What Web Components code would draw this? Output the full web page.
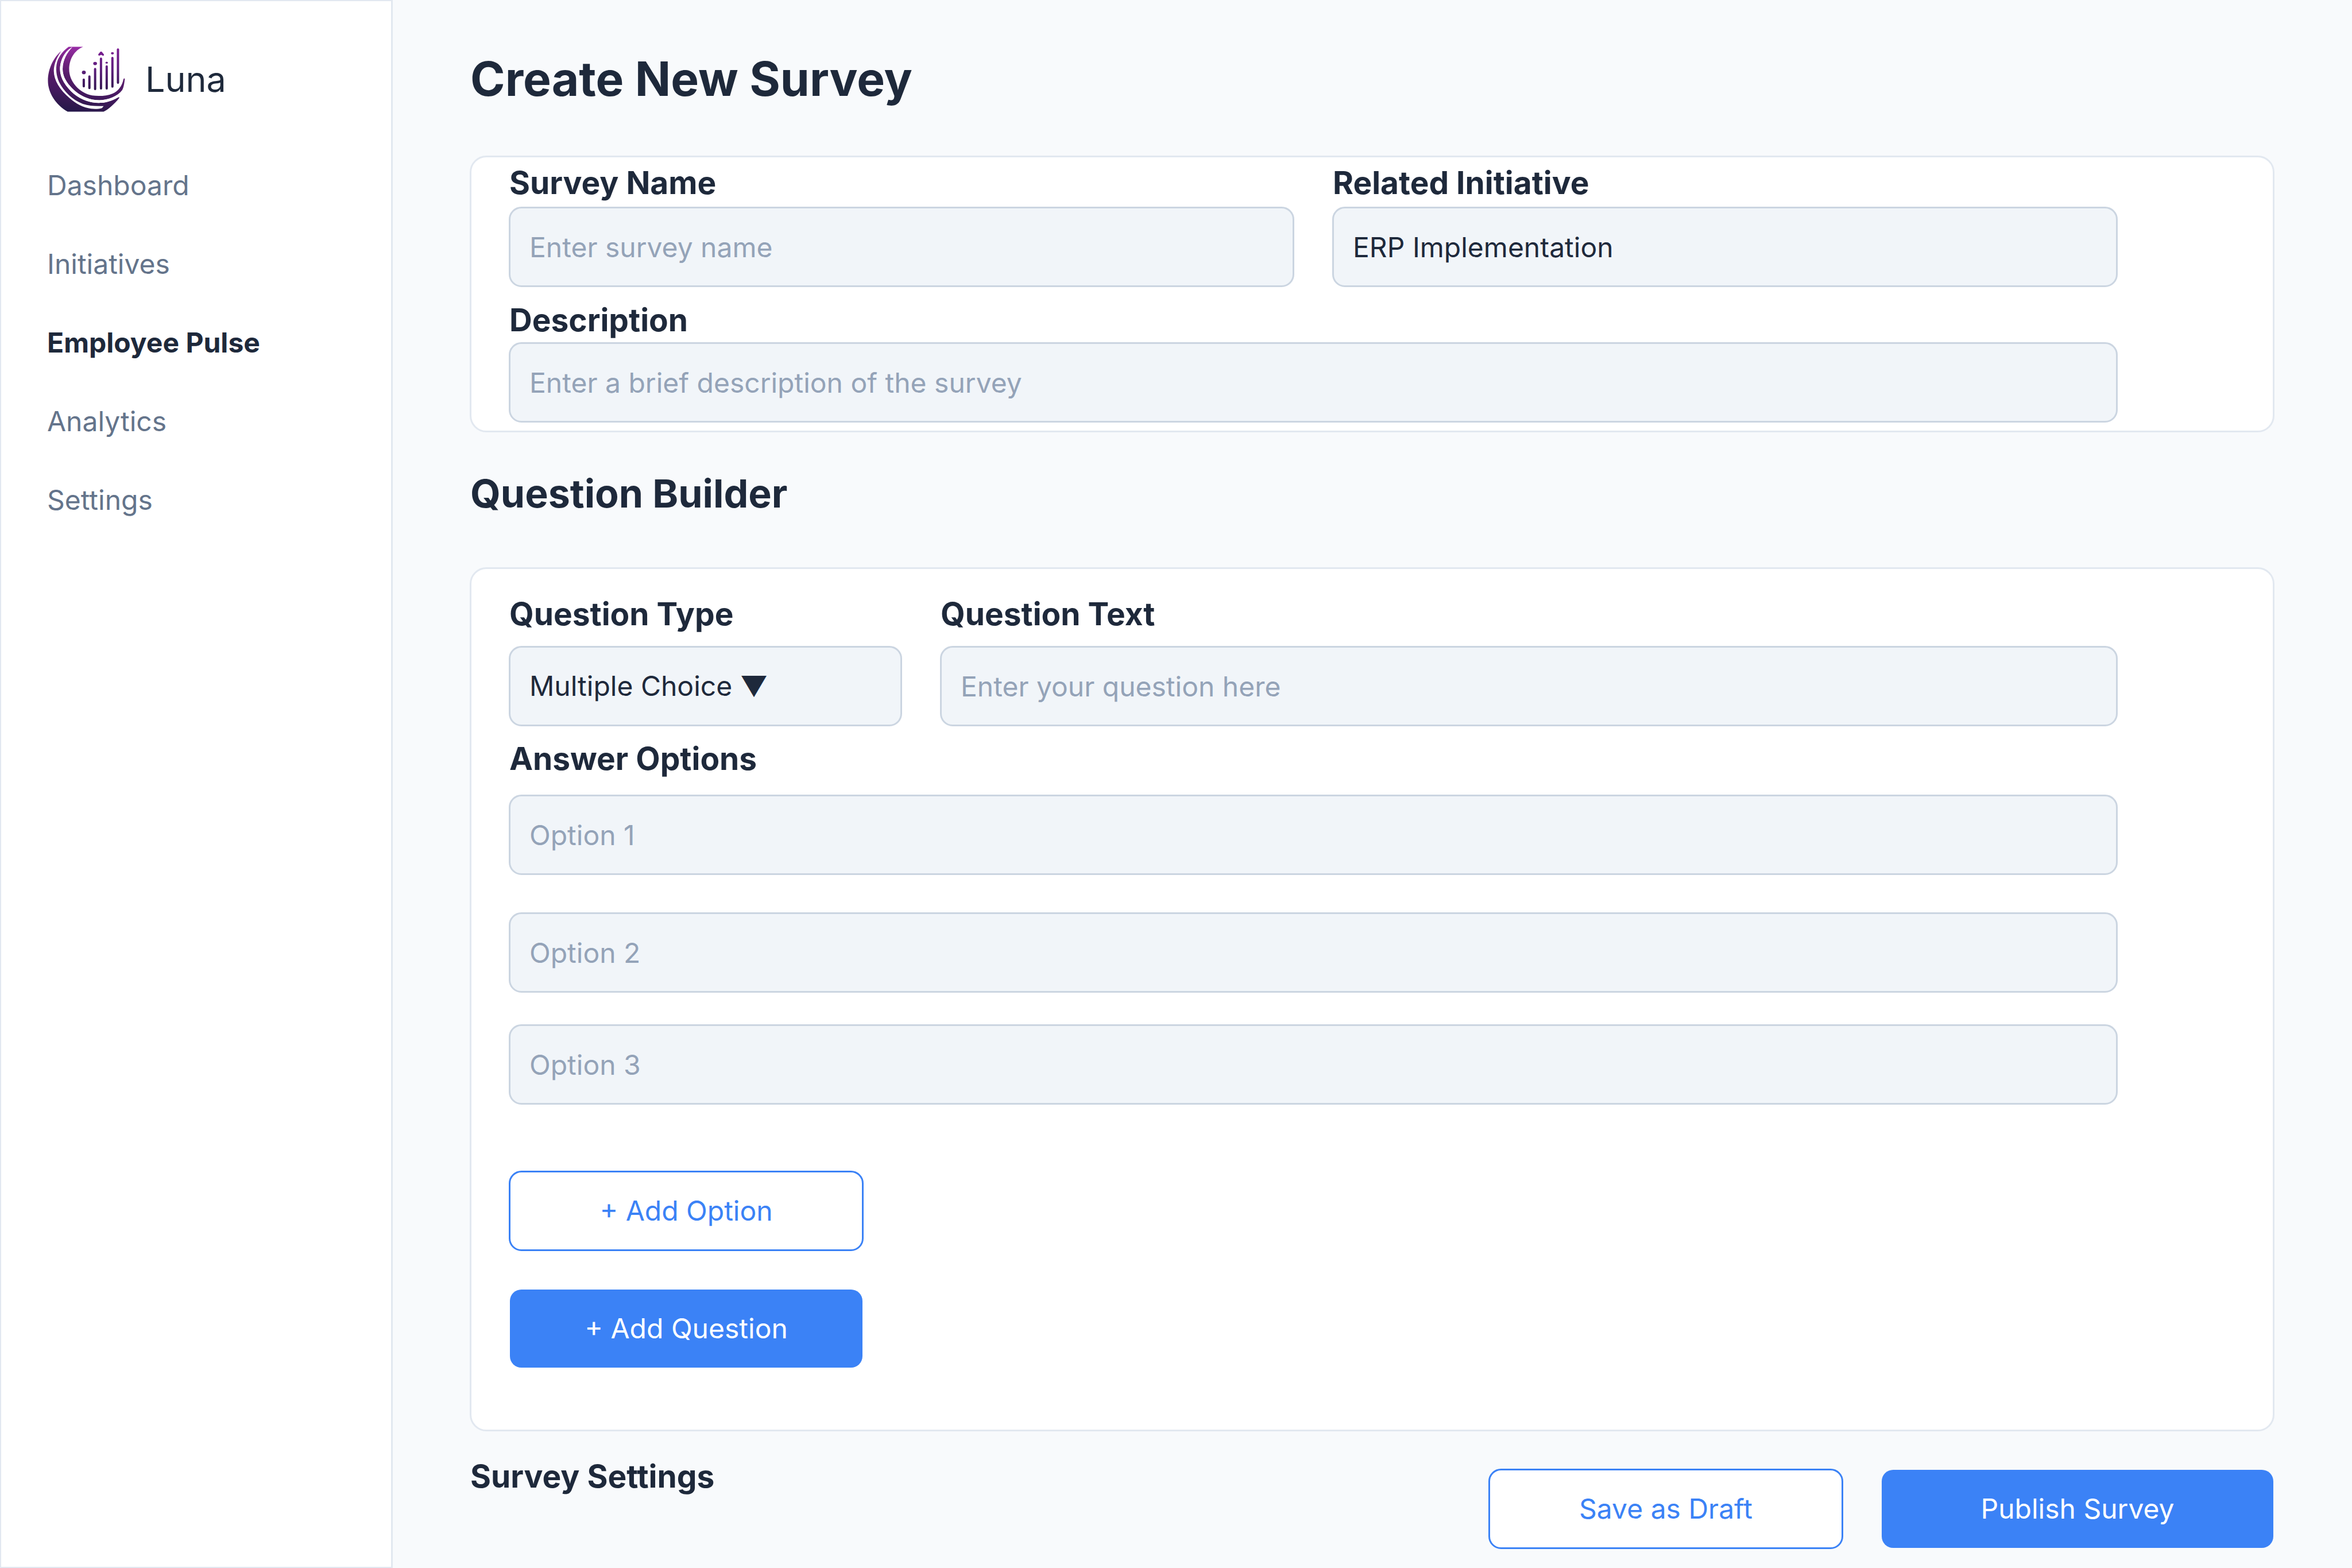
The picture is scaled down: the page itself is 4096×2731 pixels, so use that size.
<!DOCTYPE html>
<html lang="en">
<head>
<meta charset="utf-8">
<title>Luna – Create New Survey</title>
<style>
  html, body { margin: 0; min-height: 100%; }
  body {
    --ink: #1e293b;
    --muted: #64748b;
    --hint: #94a3b8;
    --line: #e2e8f0;
    --field-line: #cbd5e1;
    --field: #f1f5f9;
    --page: #f8fafc;
    --accent: #3b82f6;
    background: var(--page);
    color: var(--ink);
    font: 400 48px/58px Inter, "Liberation Sans", sans-serif;
    font-optical-sizing: none;
  }
</style>
</head>
<body>
<survey-app></survey-app>

<template id="survey-app">
  <style>
    :host { display: flex; min-height: 100vh; }
    side-bar { flex: none; width: 684px; }
    main { flex: 1; min-width: 0; box-sizing: border-box; padding: 88px 135px 32px 134px; }
    h1, h2, h3 { margin: 0; font-weight: 700; padding-left: 1px; }
    h1 { font-size: 82px; line-height: 100px; margin-bottom: 83px; }
    h2 { font-size: 68px; line-height: 82px; margin: 65px 0 88px; }
    h3 { font-size: 55px; line-height: 56px; flex: 1; }
    .details { --card-padding: 16px 270px 14px 65px; }
    .builder { --card-padding: 50px 270px 106px 65px; }
    .pair { display: grid; grid-template-columns: 1fr 1fr; column-gap: 66px; --label-gap: 14px; }
    .pair.question { grid-template-columns: 685px 1fr; --label-gap: 28px; }
    .description { margin-top: 29px; --label-gap: 11px; }
    .options { margin-top: 28px; --label-gap: 35px; }
    .options text-field + text-field { margin-top: 65px; }
    .options text-field:last-child { margin-top: 55px; }
    .adders { display: flex; flex-direction: column; align-items: flex-start; gap: 65px; margin-top: 115px; }
    app-button { width: 618px; }
    footer { display: flex; align-items: flex-start; padding-top: 50px; }
    .actions { display: flex; gap: 65px; margin-top: 15px; }
    .actions app-button[primary] { width: 686px; }
  </style>
  <side-bar>
    <luna-logo slot="logo"></luna-logo>
    <span slot="brand">Luna</span>
    <nav-link>Dashboard</nav-link>
    <nav-link>Initiatives</nav-link>
    <nav-link current>Employee Pulse</nav-link>
    <nav-link>Analytics</nav-link>
    <nav-link>Settings</nav-link>
  </side-bar>
  <main>
    <h1>Create New Survey</h1>
    <panel-card class="details">
      <div class="pair">
        <text-field label="Survey Name" placeholder="Enter survey name"></text-field>
        <text-field label="Related Initiative" value="ERP Implementation"></text-field>
      </div>
      <text-field class="description" label="Description" placeholder="Enter a brief description of the survey"></text-field>
    </panel-card>
    <h2>Question Builder</h2>
    <panel-card class="builder">
      <div class="pair question">
        <select-field label="Question Type" value="Multiple Choice ▼"></select-field>
        <text-field label="Question Text" placeholder="Enter your question here"></text-field>
      </div>
      <div class="options">
        <text-field label="Answer Options" placeholder="Option 1"></text-field>
        <text-field placeholder="Option 2"></text-field>
        <text-field placeholder="Option 3"></text-field>
      </div>
      <div class="adders">
        <app-button>+ Add Option</app-button>
        <app-button primary>+ Add Question</app-button>
      </div>
    </panel-card>
    <footer>
      <h3>Survey Settings</h3>
      <div class="actions">
        <app-button>Save as Draft</app-button>
        <app-button primary>Publish Survey</app-button>
      </div>
    </footer>
  </main>
</template>

<template id="side-bar">
  <style>
    :host { display: block; box-sizing: border-box; background: #fff; border: 2px solid var(--line); border-right-width: 3px; padding: 79px 80px; }
    header { display: flex; align-items: center; gap: 35px; font-size: 61px; line-height: 74px; }
    nav { display: flex; flex-direction: column; margin-top: 59px; }
  </style>
  <header><slot name="logo"></slot><slot name="brand"></slot></header>
  <nav aria-label="Main"><slot></slot></nav>
</template>

<template id="luna-logo">
  <style>
    :host { display: block; flex: none; width: 136px; height: 114px; }
    svg { display: block; width: 100%; height: 100%; }
  </style>
  <svg viewBox="49 76 478 401" aria-hidden="true">
    <defs>
      <linearGradient id="moon" gradientUnits="userSpaceOnUse" x1="250" y1="78" x2="190" y2="476">
        <stop offset="0" stop-color="#9a2da8"/>
        <stop offset=".2" stop-color="#7a2687"/>
        <stop offset=".45" stop-color="#561c69"/>
        <stop offset=".7" stop-color="#44195f"/>
        <stop offset=".88" stop-color="#31194f"/>
        <stop offset="1" stop-color="#24184a"/>
      </linearGradient>
      <linearGradient id="bars" gradientUnits="userSpaceOnUse" x1="0" y1="88" x2="0" y2="340">
        <stop offset="0" stop-color="#7c1c93"/>
        <stop offset=".5" stop-color="#5d1f7c"/>
        <stop offset="1" stop-color="#321550"/>
      </linearGradient>
    </defs>
    <g fill="url(#moon)">
      <path d="M135 104C90 142 54 210 54 285C54 360 102 432 175 475.500H395C420 466 466 424 490 393Q494 386 486 386C462 400 430 412 402 418L384 436L396 440L385 453C365 459 340 459 318 457C270 450 225 427 186 392C128 342 90 285 90 225C90 180 112 138 135 104Z"/>
      <path d="M181 78H205C172 96 128 150 128 216C128 270 165 325 212 365C262 405 320 424 380 421C425 418 462 401 492 386C470 412 440 432 408 440C360 443 310 442 268 428C205 404 150 350 123 295C105 255 100 212 110 172C122 132 150 100 181 78Z"/>
      <path d="M204 78H270C215 100 184 155 184 216C184 290 245 361 325 376C365 382 415 379 450 364C485 350 510 314 516 278Q520 266 525 274C523 295 518 330 508 344C480 380 425 403 370 405C300 406 235 371 190 319C160 285 144 250 144 214C144 160 172 105 204 78Z"/>
    </g>
    <path d="M203 81C160 100 128 155 128 216C128 270 165 325 212 365C262 405 320 424 380 421C425 418 462 401 486 386L520 345C480 385 425 404 370 405C300 406 235 371 190 319C160 285 144 250 144 214C144 160 172 112 203 81Z" fill="#fff"/>
    <g stroke="url(#bars)" stroke-width="14" stroke-linecap="round" fill="none">
      <path d="M273.500 279L273.600 320M308 260L308.100 330M343 214L343.100 336M379 151L379.100 333M414 198L414.100 333M449 146L449.100 321M483 94L483.100 298"/>
    </g>
    <g fill="url(#bars)">
      <ellipse cx="274" cy="235" rx="12" ry="11"/>
      <ellipse cx="343" cy="180" rx="11.500" ry="10"/>
      <ellipse cx="414" cy="175" rx="7.500" ry="6"/>
      <ellipse cx="449" cy="117.500" rx="9" ry="7.500"/>
      <path d="M374 109Q380 104 385 109L397 124Q399 132 390 132L380 127L368 132Q360 131 363 123Z"/>
    </g>
  </svg>
</template>

<template id="nav-link">
  <style>
    :host { display: block; }
    a { display: block; line-height: 137px; color: var(--muted); text-decoration: none; }
    :host([current]) a { color: var(--ink); font-weight: 700; }
  </style>
  <a href="#"><slot></slot></a>
</template>

<template id="panel-card">
  <style>
    :host { display: block; box-sizing: border-box; background: #fff; border: 3px solid var(--line); border-radius: 29px; padding: var(--card-padding); }
  </style>
  <slot></slot>
</template>

<template id="field">
  <style>
    :host { display: block; min-width: 0; }
    label { display: block; font-size: 55px; font-weight: 700; line-height: 56px; padding-left: 1px; margin-bottom: var(--label-gap); }
    input, select {
      display: block; box-sizing: border-box; width: 100%; height: 140px; margin: 0; padding: 0 33px;
      appearance: none; border: 3px solid var(--field-line); border-radius: 22px; outline: 0;
      background: var(--field); color: var(--ink); font: inherit; font-optical-sizing: inherit;
    }
    input::placeholder { color: var(--hint); opacity: 1; }
  </style>
  <label for="control"></label>
</template>

<template id="app-button">
  <style>
    :host { display: block; }
    button {
      display: block; box-sizing: border-box; width: 100%; height: 140px; margin: 0; padding: 0;
      border: 3px solid var(--accent); border-radius: 22px; background: #fff; color: var(--accent);
      font: inherit; font-optical-sizing: inherit;
    }
    :host([primary]) button { border: 2px solid transparent; background: var(--accent) padding-box; color: #fff; }
  </style>
  <button type="button"><slot></slot></button>
</template>

<script>
  class TemplateElement extends HTMLElement {
    constructor() {
      super();
      const id = this.constructor.template;
      this.attachShadow({ mode: "open" })
        .append(document.getElementById(id).content.cloneNode(true));
    }
  }

  class FormField extends TemplateElement {
    static template = "field";
    connectedCallback() {
      if (this.control) return;
      const label = this.shadowRoot.querySelector("label");
      this.control = this.createControl();
      this.control.id = "control";
      if (this.hasAttribute("label")) {
        label.textContent = this.getAttribute("label");
      } else {
        label.remove();
        this.control.setAttribute("aria-label", this.getAttribute("placeholder"));
      }
      this.shadowRoot.append(this.control);
    }
  }

  class TextField extends FormField {
    createControl() {
      const input = document.createElement("input");
      input.type = "text";
      input.placeholder = this.getAttribute("placeholder") || "";
      input.value = this.getAttribute("value") || "";
      return input;
    }
  }

  class SelectField extends FormField {
    createControl() {
      const select = document.createElement("select");
      select.add(new Option(this.getAttribute("value")));
      return select;
    }
  }

  customElements.define("luna-logo", class extends TemplateElement { static template = "luna-logo"; });
  customElements.define("nav-link", class extends TemplateElement { static template = "nav-link"; });
  customElements.define("side-bar", class extends TemplateElement { static template = "side-bar"; });
  customElements.define("panel-card", class extends TemplateElement { static template = "panel-card"; });
  customElements.define("app-button", class extends TemplateElement { static template = "app-button"; });
  customElements.define("text-field", TextField);
  customElements.define("select-field", SelectField);
  customElements.define("survey-app", class extends TemplateElement { static template = "survey-app"; });
</script>
</body>
</html>
